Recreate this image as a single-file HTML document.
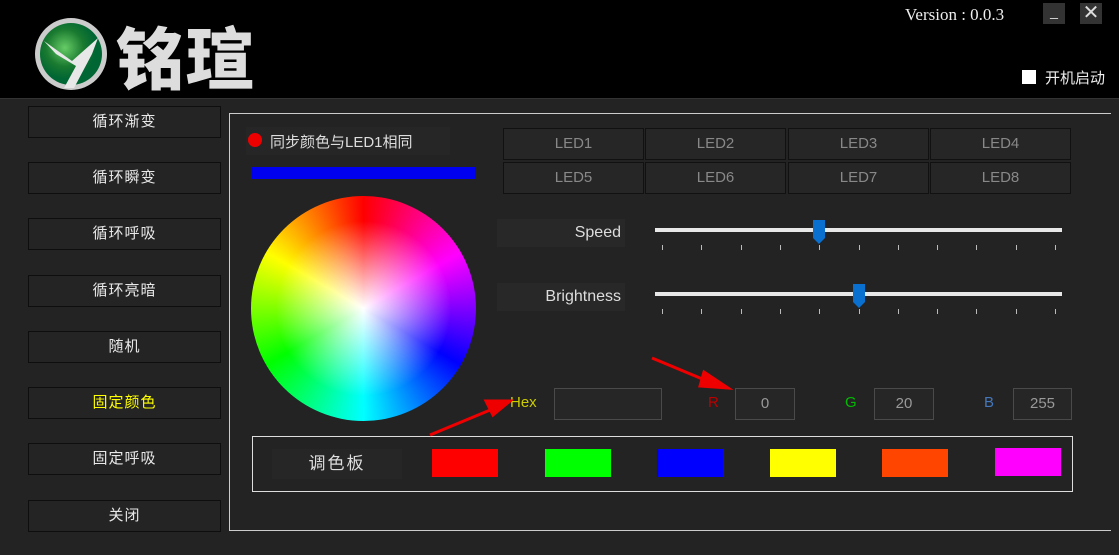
<!DOCTYPE html><html><head><meta charset="utf-8"><style>
*{margin:0;padding:0;box-sizing:border-box}
body{width:1119px;height:555px;background:#000;position:relative;overflow:hidden;font-family:"Liberation Sans","Noto Sans CJK SC",sans-serif;color:#ddd}
.a{position:absolute}
.main{left:0;top:98px;width:1119px;height:457px;background:#232323;border-top:1px solid #333}
.btn{position:absolute;left:28px;width:193px;height:32px;border:1px solid #0e0e0e;background:#242424;color:#e8e8e8;font-size:15px;text-align:center;line-height:30px;letter-spacing:1px}
.led{position:absolute;width:141px;height:32px;border:1px solid #111;background:#262626;color:#888;font-size:15px;text-align:center;line-height:30px}
.lbl{position:absolute;left:497px;width:128px;height:28px;background:#282828;color:#ddd;font-size:16px;text-align:right;padding-right:4px;line-height:28px}
.track{position:absolute;left:655px;width:407px;height:4px;background:#e8e8e8}
.tick{position:absolute;width:1px;height:5px;background:#bbb}
.box{position:absolute;top:388px;height:32px;border:1px solid #4a4a4a;background:#262626;color:#999;font-size:15px;text-align:center;line-height:30px}
.sw{position:absolute;width:66px;height:28px}
</style></head><body>
<svg class="a" style="left:30px;top:16px" width="82" height="76"><defs><radialGradient id="g" cx="40%" cy="40%"><stop offset="0" stop-color="#6c6"/><stop offset="0.6" stop-color="#1a7a30"/><stop offset="1" stop-color="#063"/></radialGradient></defs><circle cx="41" cy="38" r="36" fill="#ccc"/><circle cx="41" cy="38" r="31" fill="url(#g)"/><path d="M14 25 L42 45 L68 22 L62 38 L44 72 L34 72 L46 50 L26 38Z" fill="#e8e8e8"/></svg>
<div class="a" style="left:116px;top:10px;font-size:68px;font-weight:900;color:#ddd;letter-spacing:2px;font-family:'Noto Sans CJK SC',sans-serif;line-height:90px">铭瑄</div>
<div class="a" style="left:905px;top:5px;font-family:'Liberation Serif',serif;font-size:17px;color:#eee">Version : 0.0.3</div>
<div class="a" style="left:1043px;top:3px;width:22px;height:21px;background:#333;color:#ddd;font-size:14px;text-align:center;line-height:16px">_</div>
<div class="a" style="left:1080px;top:3px;width:22px;height:21px;background:#333;color:#ddd;font-size:20px;text-align:center;line-height:21px">✕</div>
<div class="a" style="left:1022px;top:70px;width:14px;height:14px;background:#fff"></div>
<div class="a" style="left:1045px;top:67px;font-size:15px;color:#eee">开机启动</div>
<div class="a main"></div>
<div class="btn" style="top:106px">循环渐变</div>
<div class="btn" style="top:162px">循环瞬变</div>
<div class="btn" style="top:218px">循环呼吸</div>
<div class="btn" style="top:275px">循环亮暗</div>
<div class="btn" style="top:331px">随机</div>
<div class="btn" style="top:387px;color:#ff0">固定颜色</div>
<div class="btn" style="top:443px">固定呼吸</div>
<div class="btn" style="top:500px">关闭</div>
<div class="a" style="left:229px;top:113px;width:882px;height:418px;border:1px solid #ccc;border-right:none"></div>
<div class="a" style="left:246px;top:127px;width:204px;height:28px;background:#262626"></div>
<div class="a" style="left:248px;top:133px;width:14px;height:14px;border-radius:50%;background:#e00"></div>
<div class="a" style="left:270px;top:131px;font-size:15px;color:#ddd">同步颜色与LED1相同</div>
<div class="a" style="left:252px;top:167px;width:224px;height:12px;background:#0000f0"></div>
<div class="a" style="left:251px;top:196px;width:225px;height:225px;border-radius:50%;background:radial-gradient(circle,#fff 0%,rgba(255,255,255,0) 55%),conic-gradient(#f00,#f0f 60deg,#00f 120deg,#0ff 180deg,#0f0 240deg,#ff0 300deg,#f00)"></div>
<div class="led" style="left:503px;top:128px">LED1</div><div class="led" style="left:645px;top:128px">LED2</div><div class="led" style="left:788px;top:128px">LED3</div><div class="led" style="left:930px;top:128px">LED4</div>
<div class="led" style="left:503px;top:162px">LED5</div><div class="led" style="left:645px;top:162px">LED6</div><div class="led" style="left:788px;top:162px">LED7</div><div class="led" style="left:930px;top:162px">LED8</div>
<div class="lbl" style="top:219px">Speed</div>
<div class="lbl" style="top:283px">Brightness</div>
<div class="track" style="top:228px"></div>
<div class="track" style="top:292px"></div>
<svg class="a" style="left:812px;top:220px" width="14" height="25"><path d="M1 0H13V18L7 24L1 18Z" fill="#0a70d0"/></svg>
<svg class="a" style="left:852px;top:284px" width="14" height="25"><path d="M1 0H13V18L7 24L1 18Z" fill="#0a70d0"/></svg>
<div id="ticks"></div>
<script>
var h='';for(var r of [245,309])for(var i=0;i<11;i++){h+='<div class="tick" style="left:'+Math.round(662+i*39.3)+'px;top:'+r+'px"></div>'}
document.getElementById('ticks').innerHTML=h;
</script>
<div class="a" style="left:510px;top:394px;font-size:15px;color:#cc0">Hex</div>
<div class="box" style="left:554px;width:108px"></div>
<div class="a" style="left:708px;top:394px;font-size:15px;color:#b00">R</div>
<div class="box" style="left:735px;width:60px">0</div>
<div class="a" style="left:845px;top:394px;font-size:15px;color:#0b0">G</div>
<div class="box" style="left:874px;width:60px">20</div>
<div class="a" style="left:984px;top:394px;font-size:15px;color:#47b">B</div>
<div class="box" style="left:1013px;width:59px">255</div>
<div class="a" style="left:252px;top:436px;width:821px;height:56px;border:1.5px solid #ddd"></div>
<div class="a" style="left:272px;top:449px;width:130px;height:30px;background:#262626;color:#ddd;font-size:17px;text-align:center;line-height:30px;letter-spacing:2px">调色板</div>
<div class="sw" style="left:432px;top:449px;background:#f00"></div>
<div class="sw" style="left:545px;top:449px;background:#0f0"></div>
<div class="sw" style="left:657px;top:449px;background:#00f"></div>
<div class="sw" style="left:770px;top:449px;background:#ff0"></div>
<div class="sw" style="left:882px;top:449px;background:#ff4500"></div>
<div class="sw" style="left:995px;top:448px;background:#f0f"></div>
<svg class="a" style="left:0;top:0" width="1119" height="555"><g stroke="#e00" stroke-width="3" fill="#e00"><line x1="652" y1="358" x2="712" y2="383"/><path d="M728 388L704 372L700 386Z"/><line x1="430" y1="435" x2="495" y2="408"/><path d="M510 401L486 401L493 415Z"/></g></svg>
</body></html>
